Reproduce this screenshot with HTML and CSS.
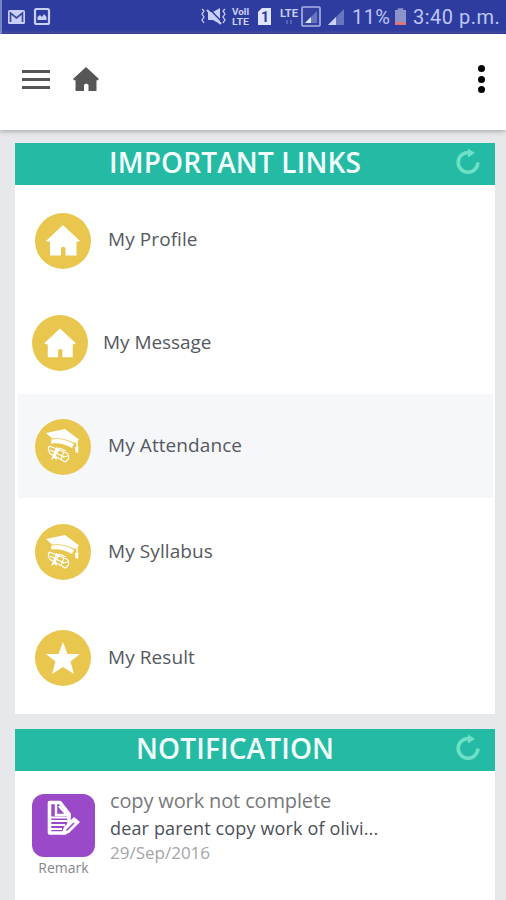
FILE: index.html
```html
<!DOCTYPE html>
<html lang="en">
<head>
<meta charset="utf-8">
<title>Student Portal</title>
<link rel="stylesheet" href="styles.css">
</head>
<body>
<svg class="defs" aria-hidden="true">
  <symbol id="house" viewBox="0 0 34 32">
    <path d="M17 0 L34 16 L30.5 17 V30.5 H19.5 V23 Q17 20.5 15 23 V30.5 H4 V17 L0 16 Z"/>
  </symbol>
  <symbol id="graduate" viewBox="0 0 34 34">
    <path fill="#fff" d="M0 4 L19 0 L33 10.500 L29 14 Q17 8 6 9.500 Z"/>
    <path fill="#fff" d="M5.500 10.500 Q17 8.500 28 15 L26 19 Q16 13 5 14.500 Z"/>
    <path d="M31 10.500 V19" fill="none" stroke="#fff" stroke-width="1.500"/>
    <path d="M29 18 H32.500 L32 24 L29.500 23 Z" fill="#fff"/>
    <path d="M3.500 17 L18 23 Q24 24.500 22.500 30 L19.500 33 L4 24.500 Q1 20 3.500 17 M4 21 L18 28" fill="none" stroke="#fff" stroke-width="1.200"/>
    <path d="M13 19 L20 22 M18 23 L15 30 M22 27 L17 28" fill="none" stroke="#fff" stroke-width="1.200"/>
    <path fill="#fff" d="M10 18 L14 20 L10 26 L11 31 L8 29 L5 31 L7 26 Z"/>
  </symbol>
  <symbol id="refresh" viewBox="0 0 26 28">
    <path d="M14 4.700 A9.800 9.800 0 1 0 22.800 14.500" fill="none" stroke="#6ee0c6" stroke-width="3.600"/>
    <path d="M13 .5 L20 5 L13 9.500 Z" fill="#6ee0c6"/>
  </symbol>
</svg>

<header class="status">
  <svg class="status-icons" viewBox="0 0 352 34">
    <rect width="2" height="34" fill="#7984c4"/>
    <rect x="8" y="10" width="17" height="14" rx="1.500" fill="#c8cff6"/>
    <path d="M10.500 22 V13 L16.500 18 L22.500 13 V22" fill="none" stroke="#3947a3" stroke-width="1.700"/>
    <rect x="35" y="9" width="14" height="15" rx="1.500" fill="none" stroke="#c8cff6" stroke-width="2.200"/>
    <path d="M37.500 20 V17 L40 15 L42 17 L44 14 L46.500 17 V20 Z" fill="#c8cff6"/>
    <path d="M202 9 L204 11 L202 14 L204 17 L202 20 L204 23 M225 9 L223 11 L225 14 L223 17 L225 20 L223 23" fill="none" stroke="#c8cff6" stroke-width="1.300"/>
    <path d="M208 12 H213 L220 8 V24 L213 20 H208 Z" fill="#c8cff6"/>
    <path d="M209 8.500 L222 22" stroke="#2f3c9f" stroke-width="1.500"/>
    <path d="M207 10 L221 24" stroke="#c8cff6" stroke-width="2"/>
    <text class="tiny stacked" x="232" y="15" textLength="17" lengthAdjust="spacingAndGlyphs">Voll</text>
    <text class="tiny stacked" x="232" y="25" textLength="17" lengthAdjust="spacingAndGlyphs">LTE</text>
    <path d="M262 8 H271 V25 H258 V12 Z" fill="#dfe4ff"/>
    <text class="sim" x="261" y="22">1</text>
    <text class="tiny" x="280" y="17" textLength="18" lengthAdjust="spacingAndGlyphs">LTE</text>
    <path d="M287 20 V24 M291 20 V24" stroke="#6572bd" stroke-width="1.500"/>
    <rect x="302" y="7" width="18" height="19" rx="1" fill="#35429f" stroke="#aab4e8" stroke-width="1.600"/>
    <path d="M305 23 L317 11 V23 Z" fill="#6874bf"/>
    <path d="M305 23 L311 17 V23 Z" fill="#dfe4ff"/>
    <path d="M328 25 L344 9 V25 Z" fill="#6874bf"/>
    <path d="M328 25 L336 17 V25 Z" fill="#cbd2f8"/>
  </svg>
  <span class="percent">11%</span>
  <svg class="battery" viewBox="0 0 12 18"><path d="M3 0 H9 V2 H12 V18 H0 V2 H3 Z" fill="#8d94cc"/><path d="M0 15 H12 V18 H0 Z" fill="#df7777"/></svg>
  <span class="clock">3:40 p.m.</span>
</header>

<nav class="toolbar">
  <div class="menu"><i></i><i></i><i></i></div>
  <svg class="home" viewBox="0 0 26 24"><path d="M13 0 L26 12 L24.500 13.500 L23.500 13 V24 H15.500 V18 Q13 15 11 18 V24 H2.500 V13 L1.500 13.500 L0 12 Z"/></svg>
  <div class="more"><i></i><i></i><i></i></div>
</nav>

<main>
  <section class="panel links">
    <div class="panel-head"><h2>IMPORTANT LINKS</h2><svg class="refresh"><use href="#refresh"/></svg></div>
    <ul>
      <li class="profile"><span class="disc"><svg class="glyph house"><use href="#house"/></svg></span><span class="label">My Profile</span></li>
      <li class="message"><span class="disc"><svg class="glyph house"><use href="#house"/></svg></span><span class="label">My Message</span></li>
      <li class="attendance"><span class="disc"><svg class="glyph cap"><use href="#graduate"/></svg></span><span class="label">My Attendance</span></li>
      <li class="syllabus"><span class="disc"><svg class="glyph cap"><use href="#graduate"/></svg></span><span class="label">My Syllabus</span></li>
      <li class="result"><span class="disc"><svg class="glyph star" viewBox="0 0 34 32"><path d="M17 0 L21.500 12 H34 L24.500 19.500 L28 32 L17 25 L6 32 L9.500 19.500 L0 12 H12.500 Z"/></svg></span><span class="label">My Result</span></li>
    </ul>
  </section>

  <section class="panel notice">
    <div class="panel-head"><h2>NOTIFICATION</h2><svg class="refresh"><use href="#refresh"/></svg></div>
    <article>
      <div class="badge">
        <div class="tile">
          <svg viewBox="0 0 34 36">
            <path d="M2.500 2.500 H13 L22 14 V29 L18 33 H2.500 Z" fill="#9a4ac9" stroke="#fff" stroke-width="3.600" stroke-linejoin="round"/>
            <path d="M9 3 V15 H21 M12 6 L19 14" fill="none" stroke="#fff" stroke-width="2.400"/>
            <path d="M4 17.500 H21 M4 21 H20 M4 25 H18 M4 29 H15" stroke="#fff" stroke-width="2"/>
            <path d="M14 35 L17 27 L27 17 L33 22 L22 33 Z" fill="#fff"/>
            <path d="M19.500 30.500 L27 23" stroke="#9a4ac9" stroke-width="1.600"/>
          </svg>
        </div>
        <span class="caption">Remark</span>
      </div>
      <div class="copy">
        <p class="subject">copy work not complete</p>
        <p class="body">dear parent copy work of olivi...</p>
        <p class="date">29/Sep/2016</p>
      </div>
    </article>
  </section>
</main>
</body>
</html>
```

FILE: styles.css
```css
* { box-sizing: border-box; }
body {
  margin: 0;
  width: 506px;
  height: 900px;
  overflow: hidden;
  background: #e7e8eb;
  font-family: "Open Sans", "Noto Sans", sans-serif;
}
.defs { display: none; }
h2, p, ul { margin: 0; padding: 0; }

.status {
  display: flex;
  align-items: center;
  height: 34px;
  background: #2f3c9f;
  border-bottom: 1px solid #11148d;
  font: 20px/34px Roboto, sans-serif;
  color: #bdc5f4;
  white-space: nowrap;
}
.status-icons { flex: none; width: 352px; height: 34px; }
.tiny { font: bold 10px Roboto, sans-serif; fill: #c8cff6; }
.stacked { font-size: 8.500px; }
.sim { font: bold 14px Roboto, sans-serif; fill: #2f3c9f; }
.percent { width: 43px; letter-spacing: .4px; }
.battery { flex: none; width: 11px; height: 17px; }
.clock { margin-left: 7px; letter-spacing: .5px; }

.toolbar {
  position: relative;
  display: flex;
  align-items: center;
  height: 96px;
  padding: 0 21px 6px 22px;
  background: #fff;
  box-shadow: 0 1px 5px #9b9fa5;
}
.menu { display: grid; gap: 5px; width: 28px; }
.menu i { height: 3px; background: #565656; }
.home { width: 26px; height: 24px; margin-left: 23px; fill: #565656; }
.more { display: grid; gap: 3.500px; margin-left: auto; }
.more i { width: 7px; height: 7px; border-radius: 50%; background: #000; }

main { padding: 13px 11px 0 15px; }
.panel { background: #fff; }
.links { height: 571px; margin-bottom: 15px; }
.notice { height: 190px; }
.panel-head {
  display: flex;
  height: 42px;
  background: #24baa4;
  padding-right: 14px;
}
h2 { padding-left: 94px; font-size: 28px; line-height: 39px; font-weight: 600; letter-spacing: .15px; color: #f3fffc; }
.notice h2 { padding-left: 121px; }
.refresh { width: 26px; height: 28px; margin: 5px 0 0 auto; }

ul { list-style: none; }
li { display: flex; align-items: center; height: 106px; padding-left: 20px; }
.profile { height: 106px; padding-top: 5px; }
.message { height: 103px; padding: 1px 0 0 17px; }
.attendance { height: 104px; margin: 0 2px 0 3px; padding: 1px 0 0 17px; background: #f5f7fb; }
.syllabus { height: 106px; padding-top: 2px; }
.result { height: 106px; padding-top: 2px; }
.disc {
  display: grid;
  place-items: center;
  width: 56px;
  height: 56px;
  border-radius: 50%;
  background: #e9c74e;
}
.glyph { width: 34px; height: 32px; fill: #fff; }
.message .glyph { width: 32px; height: 31px; }
.cap { height: 34px; margin-top: -1px; }
.label { margin: -3px 0 0 17px; font-size: 19px; line-height: 26px; letter-spacing: .08px; color: #555960; }
.message .label { margin-left: 15px; letter-spacing: -.05px; }

article { display: flex; padding: 16px 0 0 17px; }
.badge { width: 63px; display: flex; flex-direction: column; align-items: center; margin-top: 7px; }
.tile { width: 63px; height: 63px; border-radius: 12px; background: #9a4ac9; padding: 6px 0 0 15px; }
.tile svg { display: block; width: 34px; height: 36px; }
.caption { font-size: 14px; line-height: 21px; color: #85878b; }
.copy { margin-left: 15px; white-space: nowrap; }
.subject { font-size: 20px; line-height: 28px; letter-spacing: -.14px; color: #77797d; }
.body { font-size: 18px; line-height: 27px; letter-spacing: .15px; color: #4b4f58; }
.date { font-size: 17px; line-height: 22px; color: #a3a5a8; }
```
